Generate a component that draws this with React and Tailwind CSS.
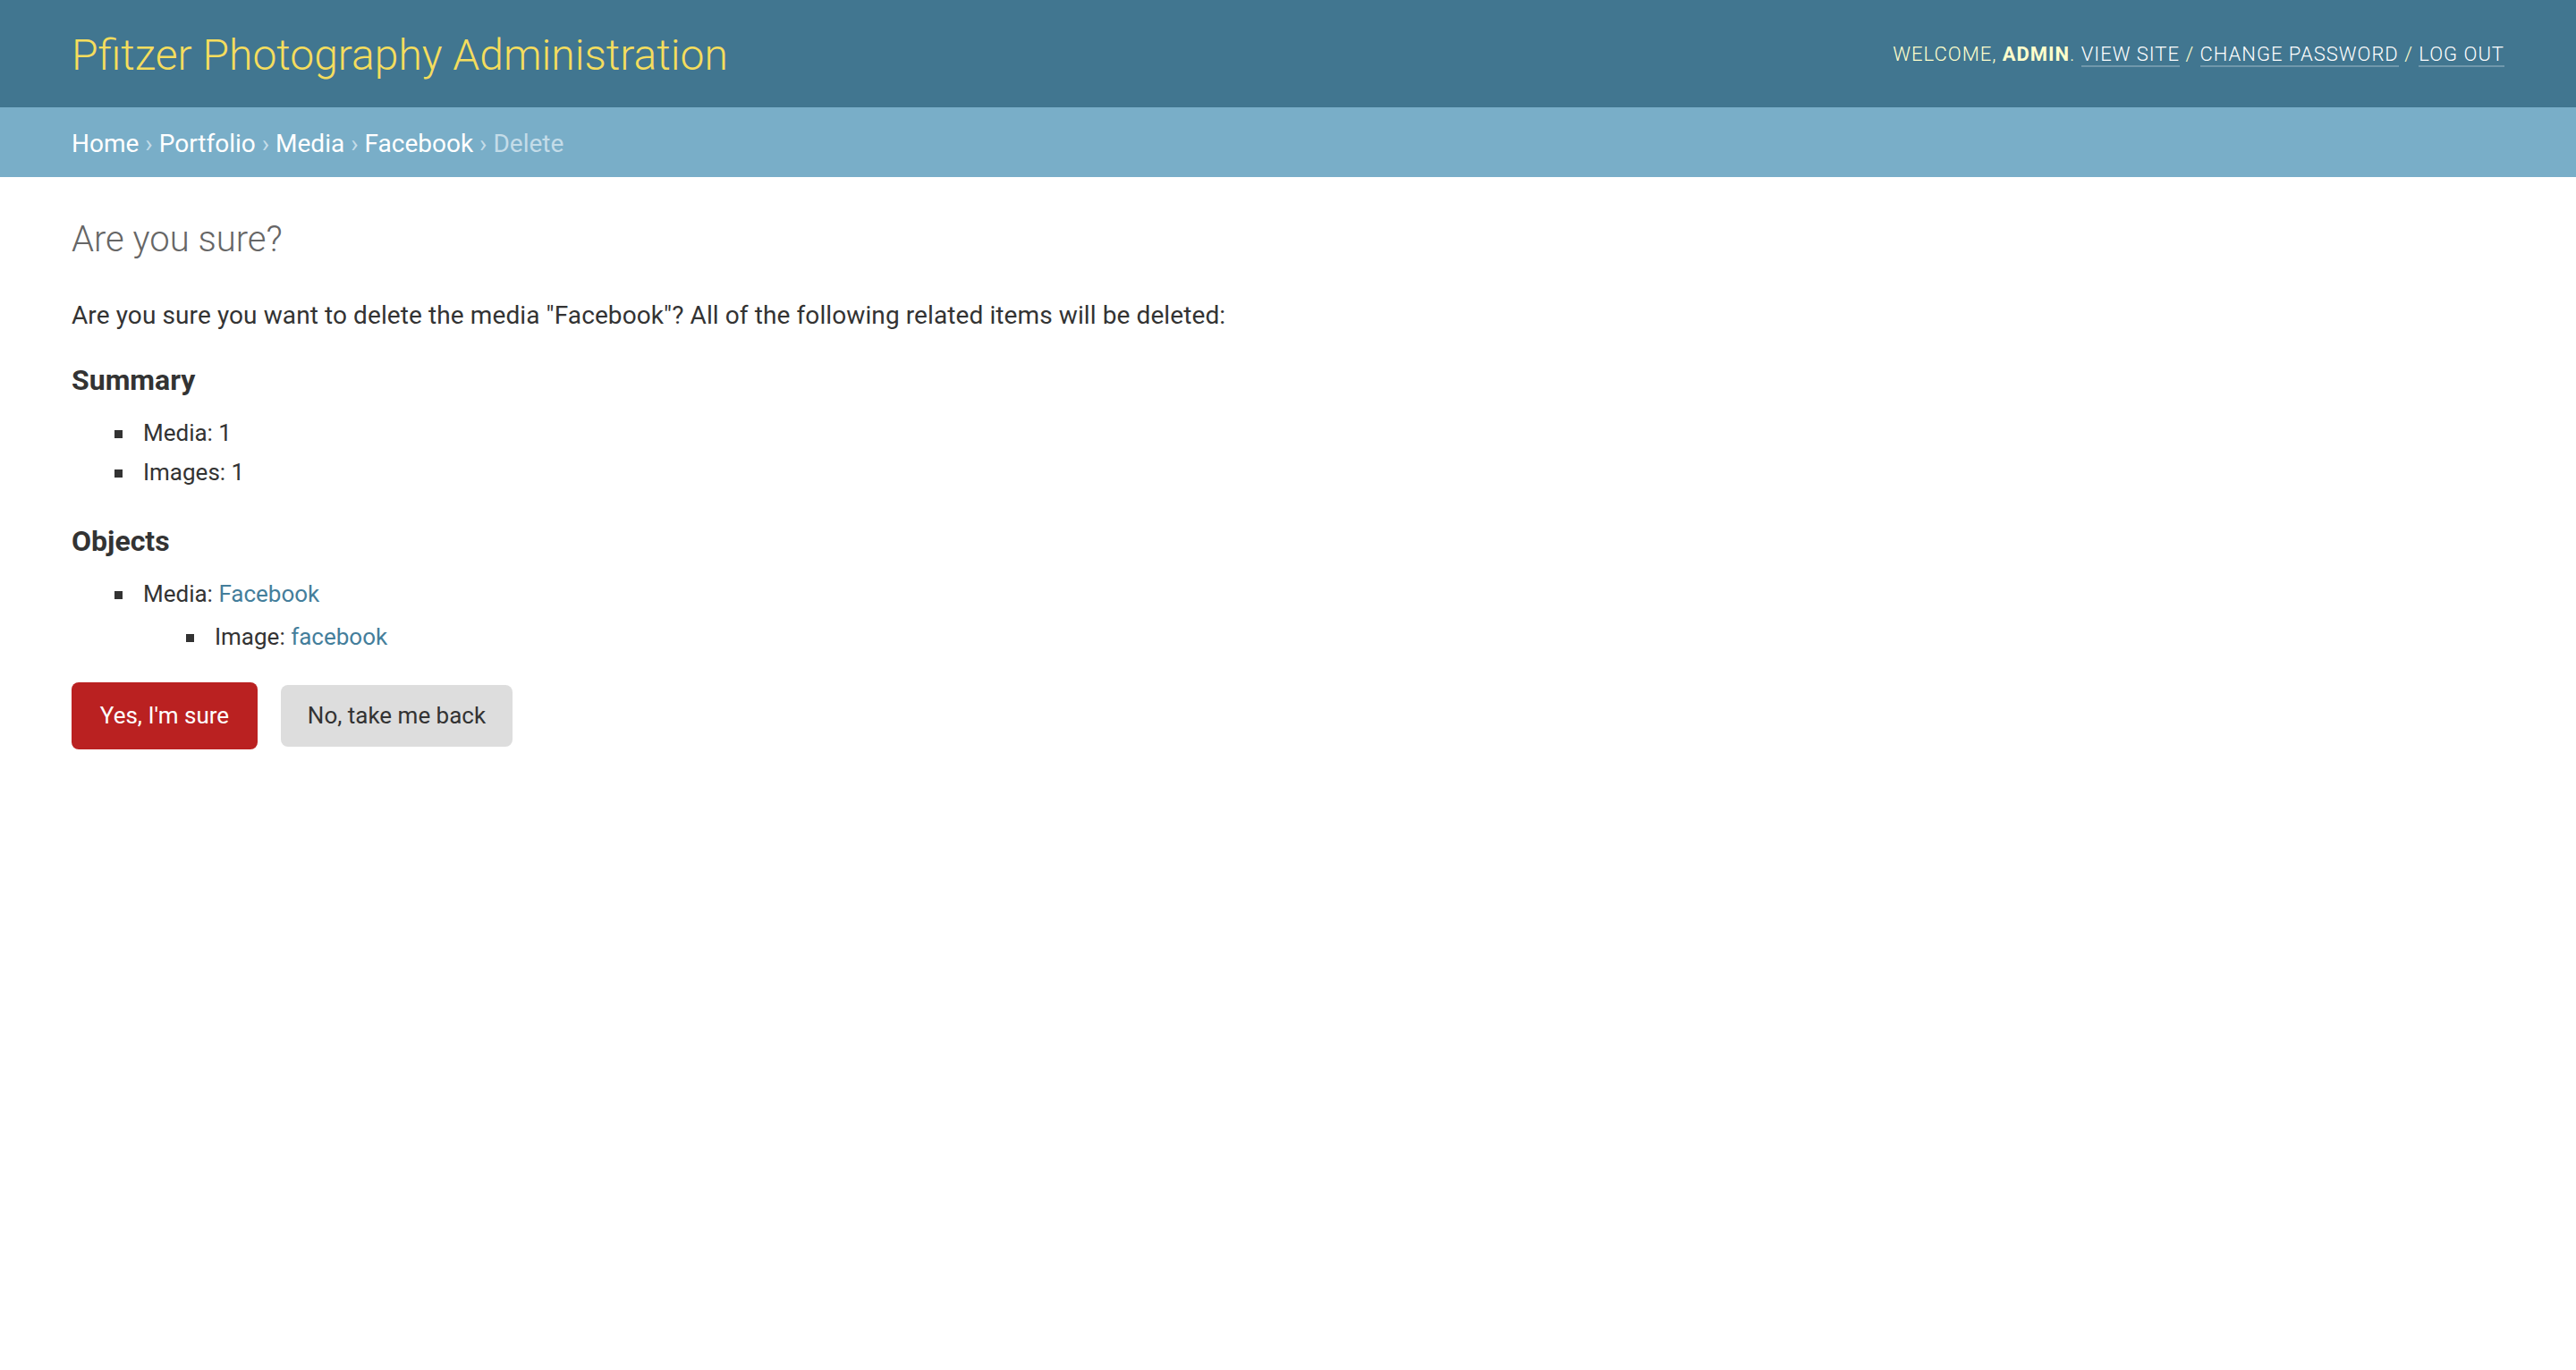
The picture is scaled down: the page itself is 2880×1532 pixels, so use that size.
import React from "react";

const li =
  "relative list-none py-[2px] text-[26px] leading-[40px] before:absolute before:left-[-32px] before:top-[19px] before:h-[9px] before:w-[9px] before:bg-[#333] before:content-['']";

export default function App() {
  return (
    <div className="min-h-screen bg-white font-['Roboto','Liberation_Sans',sans-serif] text-[#333]">
      <header className="flex h-[120px] items-center justify-between bg-[#417690] px-[80px]">
        <h1 className="pt-[4px] text-[48px] font-light leading-[56px] text-[#f5dd5d]">
          Pfitzer Photography Administration
        </h1>
        <div className="text-[22px] font-light uppercase tracking-[1px] text-[#ffffcc]">
          Welcome, <strong className="font-bold">admin</strong>.{" "}
          <a href="#" className="border-b-2 border-white/25 text-white">View site</a> /{" "}
          <a href="#" className="border-b-2 border-white/25 text-white">Change password</a> /{" "}
          <a href="#" className="border-b-2 border-white/25 text-white">Log out</a>
        </div>
      </header>
      <nav className="bg-[#79aec8] px-[80px] pt-[22px] pb-[18px] text-[28px] leading-[38px] text-[#c4dce8]">
        <a href="#" className="text-white">Home</a> ›{" "}
        <a href="#" className="text-white">Portfolio</a> ›{" "}
        <a href="#" className="text-white">Media</a> ›{" "}
        <a href="#" className="text-white">Facebook</a> › Delete
      </nav>
      <main className="px-[80px] pt-[46px]">
        <h1 className="mb-[41px] text-[40px] font-light leading-[48px] text-[#666]">Are you sure?</h1>
        <p className="mb-[34px] text-[28px] leading-[39px] tracking-[0.1px]">
          Are you sure you want to delete the media "Facebook"? All of the following related items will be deleted:
        </p>
        <h2 className="mb-[18px] text-[32px] font-bold leading-[38px]">Summary</h2>
        <ul className="mb-[36px] pl-[80px]">
          <li className={li}>Media: 1</li>
          <li className={li}>Images: 1</li>
        </ul>
        <h2 className="mb-[18px] text-[32px] font-bold leading-[38px]">Objects</h2>
        <ul className="mb-[27px] pl-[80px]">
          <li className={li}>
            Media: <a href="#" className="text-[#447e9b]">Facebook</a>
            <ul className="mt-[6px] pl-[80px]">
              <li className={li}>
                Image: <a href="#" className="text-[#447e9b]">facebook</a>
              </li>
            </ul>
          </li>
        </ul>
        <div className="flex items-center gap-[26px]">
          <button className="h-[75px] w-[208px] rounded-[8px] bg-[#ba2121] text-[26px] text-white">
            Yes, I'm sure
          </button>
          <a href="#" className="flex h-[69px] w-[259px] items-center justify-center rounded-[8px] bg-[#dddddd] text-[26px] text-[#333]">
            No, take me back
          </a>
        </div>
      </main>
    </div>
  );
}
